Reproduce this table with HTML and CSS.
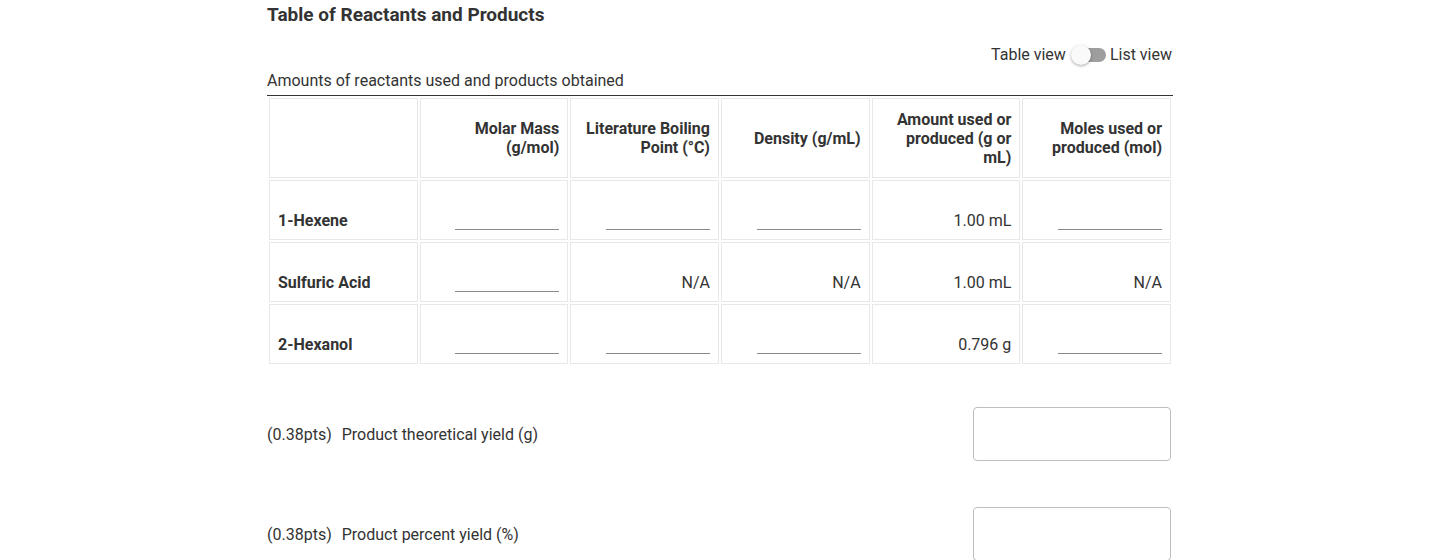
FILE: index.html
```html
<!DOCTYPE html>
<html>
<head>
<meta charset="utf-8">
<link rel="stylesheet" href="styles.css">
</head>
<body>
<main class="page">
  <h2 class="title">Table of Reactants and Products</h2>
  <div class="view-toggle">
    <span>Table view</span>
    <span class="switch"><span class="knob"></span></span>
    <span>List view</span>
  </div>
  <div class="caption">Amounts of reactants used and products obtained</div>
  <table class="data">
    <thead>
      <tr>
        <th></th>
        <th>Molar Mass (g/mol)</th>
        <th>Literature Boiling Point (°C)</th>
        <th>Density (g/mL)</th>
        <th>Amount used or produced (g or mL)</th>
        <th>Moles used or produced (mol)</th>
      </tr>
    </thead>
    <tbody>
      <tr>
        <td class="label">1-Hexene</td>
        <td><span class="blank"></span></td>
        <td><span class="blank"></span></td>
        <td><span class="blank"></span></td>
        <td>1.00 mL</td>
        <td><span class="blank"></span></td>
      </tr>
      <tr>
        <td class="label">Sulfuric Acid</td>
        <td><span class="blank"></span></td>
        <td>N/A</td>
        <td>N/A</td>
        <td>1.00 mL</td>
        <td>N/A</td>
      </tr>
      <tr>
        <td class="label">2-Hexanol</td>
        <td><span class="blank"></span></td>
        <td><span class="blank"></span></td>
        <td><span class="blank"></span></td>
        <td>0.796 g</td>
        <td><span class="blank"></span></td>
      </tr>
    </tbody>
  </table>
  <div class="question">
    <div class="q-text"><span class="pts">(0.38pts)</span>Product theoretical yield (g)</div>
    <div class="answer-box"></div>
  </div>
  <div class="question">
    <div class="q-text"><span class="pts">(0.38pts)</span>Product percent yield (%)</div>
    <div class="answer-box"></div>
  </div>
</main>
</body>
</html>
```
FILE: styles.css
```css
* { box-sizing: border-box; }
html, body { margin: 0; padding: 0; background: #fff; }
body {
  font-family: Roboto, "Liberation Sans", sans-serif;
  color: #333;
  font-size: 16px;
  overflow: hidden;
}
.page {
  width: 906px;
  margin: 0 auto;
  padding-top: 4px;
}
.title {
  margin: 0;
  font-size: 19px;
  line-height: 22px;
  font-weight: 700;
  color: #333;
}
.view-toggle {
  display: flex;
  justify-content: flex-end;
  align-items: center;
  gap: 4px;
  margin-top: 18px;
  margin-right: 1px;
  height: 22px;
  line-height: 22px;
  color: #333;
}
.switch {
  position: relative;
  width: 32px;
  height: 14px;
  border-radius: 7px;
  background: #9e9e9e;
  margin: 0 0 0 4px;
}
.knob {
  position: absolute;
  left: -3px;
  top: -3px;
  width: 20px;
  height: 20px;
  border-radius: 50%;
  background: #fafafa;
  box-shadow: 0 1px 3px rgba(0,0,0,0.35);
}
.caption {
  margin-top: 5px;
  line-height: 19px;
  padding-bottom: 5px;
  border-bottom: 1px solid #333;
}
.data {
  width: 906px;
  border-collapse: separate;
  border-spacing: 2px;
  table-layout: fixed;
  margin-top: 0;
}
.data th, .data td {
  border: 1px solid #e8e8e8;
  text-align: right;
  padding: 8px 8px 8px 8px;
  line-height: 19px;
  font-size: 16px;
}
.data th {
  height: 80px;
  font-weight: 700;
  vertical-align: middle;
  padding-left: 14px;
}
.data td {
  height: 60px;
  vertical-align: bottom;
  padding-bottom: 9px;
}
.data td.label {
  text-align: left;
  font-weight: 700;
}
.blank {
  display: inline-block;
  width: 104px;
  height: 20px;
  border-bottom: 1px solid #8a8a8a;
  vertical-align: bottom;
}
.question {
  display: flex;
  justify-content: space-between;
  align-items: center;
  margin-top: 41px;
}
.question + .question { margin-top: 46px; }
.q-text { line-height: 19px; }
.pts { margin-right: 10px; }
.answer-box {
  width: 198px;
  height: 54px;
  border: 1px solid #bdbdbd;
  border-radius: 4px;
  margin-right: 2px;
}
```
